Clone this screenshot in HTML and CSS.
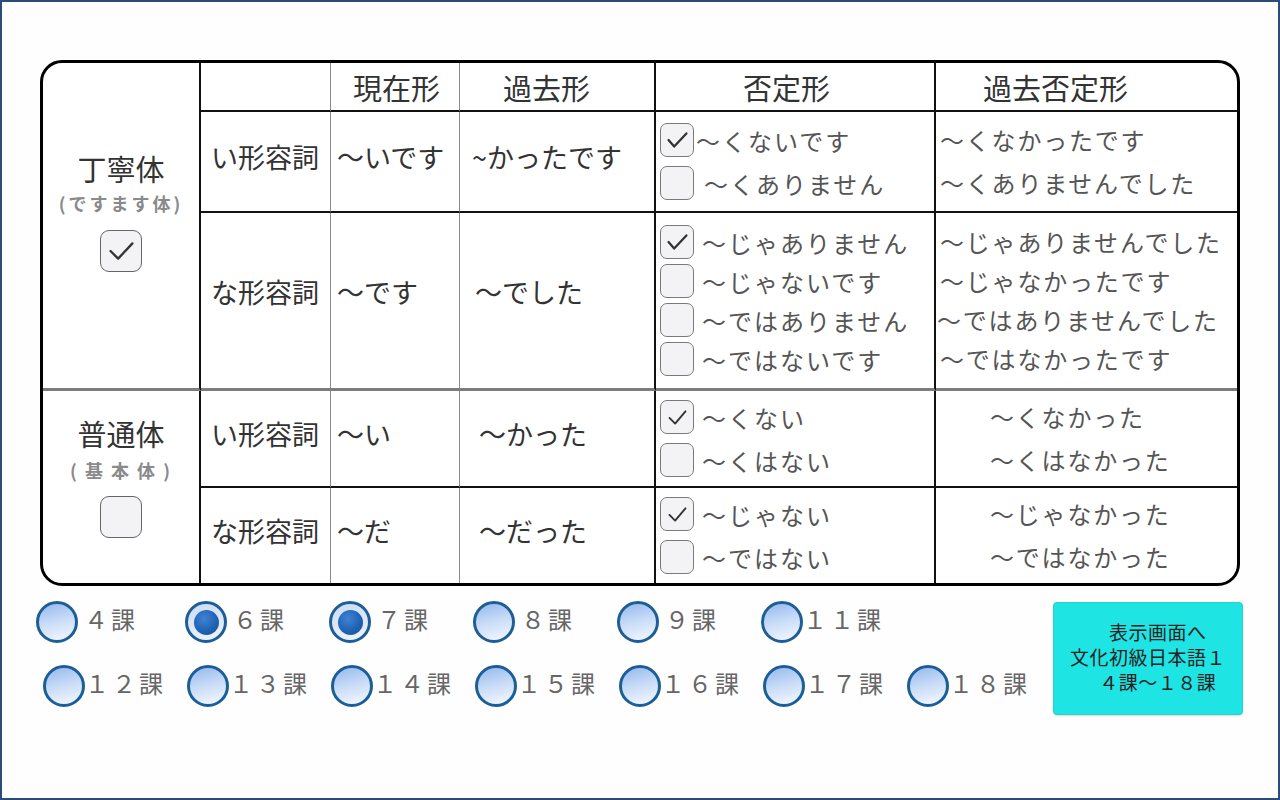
FILE: index.html
```html
<!DOCTYPE html>
<html lang="ja">
<head>
<meta charset="utf-8">
<title>形容詞の活用</title>
<link rel="stylesheet" href="styles.css">
</head>
<body>
<main class="page">
  <section class="sheet">
    <div class="style-cell style-cell--polite">
      <div class="style-name">丁寧体</div>
      <div class="style-sub">(ですます体)</div>
      <span class="box box--lg"><svg viewBox="0 0 42 42"><polyline points="10,21 18,29 33,13"/></svg></span>
    </div>
    <div class="style-cell style-cell--plain">
      <div class="style-name">普通体</div>
      <div class="style-sub style-sub--spaced">( 基 本 体 )</div>
      <span class="box box--lg"></span>
    </div>

    <div class="cell head"></div>
    <div class="cell head head--now">現在形</div>
    <div class="cell head head--past cell--strong">過去形</div>
    <div class="cell head head--neg cell--strong">否定形</div>
    <div class="cell head head--pastneg cell--end">過去否定形</div>

    <div class="cell label">い形容詞</div>
    <div class="cell value">〜いです</div>
    <div class="cell value value--r1 cell--strong">~かったです</div>
    <div class="cell cell--strong">
      <ul class="opts">
        <li class="opt opt--tight"><span class="box"><svg viewBox="0 0 34 34"><polyline points="8,17 14,24 27,10"/></svg></span><span>〜くないです</span></li>
        <li class="opt opt--wide"><span class="box"></span><span>〜くありません</span></li>
      </ul>
    </div>
    <div class="cell cell--end">
      <ul class="forms">
        <li>〜くなかったです</li>
        <li>〜くありませんでした</li>
      </ul>
    </div>

    <div class="cell label cell--sep cell--raised">な形容詞</div>
    <div class="cell value cell--sep cell--raised">〜です</div>
    <div class="cell value value--r2 cell--strong cell--sep cell--raised">〜でした</div>
    <div class="cell cell--strong cell--sep">
      <ul class="opts opts--dense">
        <li class="opt"><span class="box"><svg viewBox="0 0 34 34"><polyline points="8,17 14,24 27,10"/></svg></span><span>〜じゃありません</span></li>
        <li class="opt"><span class="box"></span><span>〜じゃないです</span></li>
        <li class="opt"><span class="box"></span><span>〜ではありません</span></li>
        <li class="opt"><span class="box"></span><span>〜ではないです</span></li>
      </ul>
    </div>
    <div class="cell cell--end cell--sep">
      <ul class="forms forms--dense">
        <li>〜じゃありませんでした</li>
        <li>〜じゃなかったです</li>
        <li class="forms__shift">〜ではありませんでした</li>
        <li>〜ではなかったです</li>
      </ul>
    </div>

    <div class="cell label">い形容詞</div>
    <div class="cell value">〜い</div>
    <div class="cell value value--r3 cell--strong">〜かった</div>
    <div class="cell cell--strong">
      <ul class="opts">
        <li class="opt"><span class="box"><svg viewBox="0 0 34 34"><polyline class="thin" points="9,18 15,24 26,11"/></svg></span><span>〜くない</span></li>
        <li class="opt"><span class="box"></span><span>〜くはない</span></li>
      </ul>
    </div>
    <div class="cell cell--end">
      <ul class="forms forms--indent">
        <li>〜くなかった</li>
        <li>〜くはなかった</li>
      </ul>
    </div>

    <div class="cell label cell--last">な形容詞</div>
    <div class="cell value cell--last">〜だ</div>
    <div class="cell value value--r3 cell--strong cell--last">〜だった</div>
    <div class="cell cell--strong cell--last">
      <ul class="opts">
        <li class="opt"><span class="box"><svg viewBox="0 0 34 34"><polyline class="thin" points="9,18 15,24 26,11"/></svg></span><span>〜じゃない</span></li>
        <li class="opt"><span class="box"></span><span>〜ではない</span></li>
      </ul>
    </div>
    <div class="cell cell--end cell--last">
      <ul class="forms forms--indent">
        <li>〜じゃなかった</li>
        <li>〜ではなかった</li>
      </ul>
    </div>
  </section>

  <section class="controls">
    <div class="lessons">
      <div class="lesson-row lesson-row--first">
        <label class="radio"><span class="radio-dot"></span><span class="radio-label">４課</span></label>
        <label class="radio is-on"><span class="radio-dot"></span><span class="radio-label">６課</span></label>
        <label class="radio is-on"><span class="radio-dot"></span><span class="radio-label">７課</span></label>
        <label class="radio"><span class="radio-dot"></span><span class="radio-label">８課</span></label>
        <label class="radio"><span class="radio-dot"></span><span class="radio-label">９課</span></label>
        <label class="radio"><span class="radio-dot"></span><span class="radio-label radio-label--two">１１課</span></label>
      </div>
      <div class="lesson-row lesson-row--second">
        <label class="radio"><span class="radio-dot"></span><span class="radio-label radio-label--two">１２課</span></label>
        <label class="radio"><span class="radio-dot"></span><span class="radio-label radio-label--two">１３課</span></label>
        <label class="radio"><span class="radio-dot"></span><span class="radio-label radio-label--two">１４課</span></label>
        <label class="radio"><span class="radio-dot"></span><span class="radio-label radio-label--two">１５課</span></label>
        <label class="radio"><span class="radio-dot"></span><span class="radio-label radio-label--two">１６課</span></label>
        <label class="radio"><span class="radio-dot"></span><span class="radio-label radio-label--two">１７課</span></label>
        <label class="radio"><span class="radio-dot"></span><span class="radio-label radio-label--two">１８課</span></label>
      </div>
    </div>
    <button class="go-btn" type="button"><span class="go-line">　表示画面へ</span><span class="go-line">文化初級日本語１</span><span class="go-line">　４課〜１８課</span></button>
  </section>
</main>
</body>
</html>
```
FILE: styles.css
```css
* { box-sizing: border-box; }

html, body {
  margin: 0;
  height: 100%;
}

body {
  font-family: "Noto Sans CJK JP", "Noto Sans", sans-serif;
  color: #333;
  background: #fff;
}

.page {
  width: 1280px;
  height: 800px;
  border: 2px solid #2d4b79;
  overflow: hidden;
  background: #fefefe;
}

/* ---------- table ---------- */
.sheet {
  display: grid;
  grid-template-columns: 158px 130px 129px 196px 280px 301px;
  grid-template-rows: 49px 101px 178px 97px 95px;
  width: 1200px;
  height: 526px;
  margin: 58px 0 0 38px;
  border: 3px solid #000;
  border-radius: 22px;
  overflow: hidden;
  background: #fff;
}

.style-cell {
  grid-column: 1;
  display: flex;
  flex-direction: column;
  align-items: center;
  border-right: 2px solid #111;
}

.style-cell--polite {
  grid-row: 1 / span 3;
  padding-top: 87px;
  border-bottom: 3px solid #7c7c7c;
}

.style-cell--plain {
  grid-row: 4 / span 2;
  padding-top: 24px;
}

.style-name {
  font-size: 29px;
  line-height: 36px;
  color: #333;
}

.style-sub {
  margin-top: 5px;
  font-size: 18px;
  line-height: 24px;
  font-weight: bold;
  letter-spacing: 3px;
  color: #8a8a8a;
}

.style-cell--plain .style-sub {
  margin-top: 7px;
}

.style-sub--spaced {
  letter-spacing: 2px;
}

.style-cell .box--lg {
  margin-top: 15px;
}

.style-cell--plain .box--lg {
  margin-top: 14px;
}

.cell {
  display: flex;
  align-items: center;
  border-right: 1px solid #8a8a8a;
  border-bottom: 2px solid #111;
  min-width: 0;
}

.cell--strong { border-right: 2px solid #111; }
.cell--end { border-right: none; }
.cell--sep { border-bottom: 3px solid #7c7c7c; }
.cell--last { border-bottom: none; }

.head {
  font-size: 29px;
  line-height: 36px;
  color: #333;
}

.head--now { padding-left: 22px; }
.head--past { padding-left: 43px; }
.head--neg { padding-left: 87px; }
.head--pastneg { padding-left: 47px; }

.label {
  padding-left: 10px;
  padding-bottom: 9px;
  font-size: 27px;
  line-height: 36px;
}

.value {
  padding-left: 6px;
  padding-bottom: 9px;
  font-size: 27px;
  line-height: 36px;
  white-space: nowrap;
}

.cell--raised { padding-bottom: 18px; }

.value--r1 { padding-left: 12px; }
.value--r2 { padding-left: 15px; }
.value--r3 { padding-left: 19px; }

/* ---------- option lists ---------- */
.opts, .forms {
  list-style: none;
  margin: 0;
  padding: 0;
  display: flex;
  flex-direction: column;
  gap: 9px;
}

.opts { padding-left: 4px; }

.opts--dense, .forms--dense { gap: 5px; }

.opt {
  display: flex;
  align-items: center;
  gap: 8px;
  height: 34px;
  font-size: 24px;
  letter-spacing: 2px;
  color: #555;
  white-space: nowrap;
}

.opt--tight { gap: 2px; }
.opt--wide { gap: 10px; }

.forms {
  padding-left: 4px;
}

.forms li {
  height: 34px;
  line-height: 34px;
  font-size: 24px;
  letter-spacing: 1.8px;
  color: #555;
  white-space: nowrap;
}

.forms li.forms__shift { margin-left: -3px; }

.forms--indent { padding-left: 54px; }

/* ---------- checkboxes ---------- */
.box {
  flex: none;
  display: inline-flex;
  width: 34px;
  height: 34px;
  border: 1.5px solid #7a7a7a;
  border-radius: 7px;
  background: #f3f3f5;
}

.box--lg {
  width: 42px;
  height: 42px;
  border-radius: 9px;
  border-color: #666;
}

.box svg {
  width: 100%;
  height: 100%;
}

.box polyline {
  fill: none;
  stroke: #333;
  stroke-width: 2.4;
  stroke-linecap: round;
  stroke-linejoin: round;
}

.box polyline.thin { stroke-width: 2; }

/* ---------- lesson radios ---------- */
.controls {
  display: flex;
  align-items: flex-start;
  margin-top: 15px;
}

.lessons {
  display: flex;
  flex-direction: column;
  gap: 22px;
}

.lesson-row {
  display: grid;
  grid-auto-flow: column;
  grid-auto-columns: 144px;
}

.lesson-row--first {
  padding-left: 34px;
  grid-template-columns: 149px;
}

.lesson-row--second {
  padding-left: 41px;
}

.radio {
  display: flex;
  align-items: center;
  height: 42px;
}

.radio-dot {
  flex: none;
  display: flex;
  align-items: center;
  justify-content: center;
  width: 42px;
  height: 42px;
  border-radius: 50%;
  border: 3px solid #1d5e98;
  background: linear-gradient(165deg, #93b8ee 0%, #c6daf7 45%, #f6f9fe 100%);
}

.radio.is-on .radio-dot {
  background: linear-gradient(165deg, #c9dbf5 0%, #eef4fc 100%);
}

.radio.is-on .radio-dot::after {
  content: "";
  width: 25px;
  height: 25px;
  border-radius: 50%;
  background: radial-gradient(circle at 40% 35%, #3e83d2 0%, #2063b3 55%, #17508f 100%);
}

.radio-label {
  margin-left: 6px;
  padding-bottom: 6px;
  font-size: 24px;
  line-height: 34px;
  letter-spacing: 3px;
  color: #666;
  white-space: nowrap;
}

.radio-label--two { margin-left: 0; }

/* ---------- button ---------- */
.go-btn {
  display: flex;
  flex-direction: column;
  justify-content: center;
  align-items: center;
  margin: 1px 35px 0 auto;
  width: 190px;
  height: 113px;
  padding: 0 0 4px;
  border: 1px solid #27cfcf;
  border-radius: 4px;
  background: #1fe4e4;
  font-family: "Noto Sans CJK JP", "Noto Sans", sans-serif;
  font-size: 19px;
  line-height: 25px;
  color: #222;
  letter-spacing: 0.5px;
  box-shadow: 0 1px 2px rgba(0, 0, 0, 0.15);
}

.go-line {
  display: block;
  height: 25px;
  line-height: 25px;
  white-space: nowrap;
}
```
